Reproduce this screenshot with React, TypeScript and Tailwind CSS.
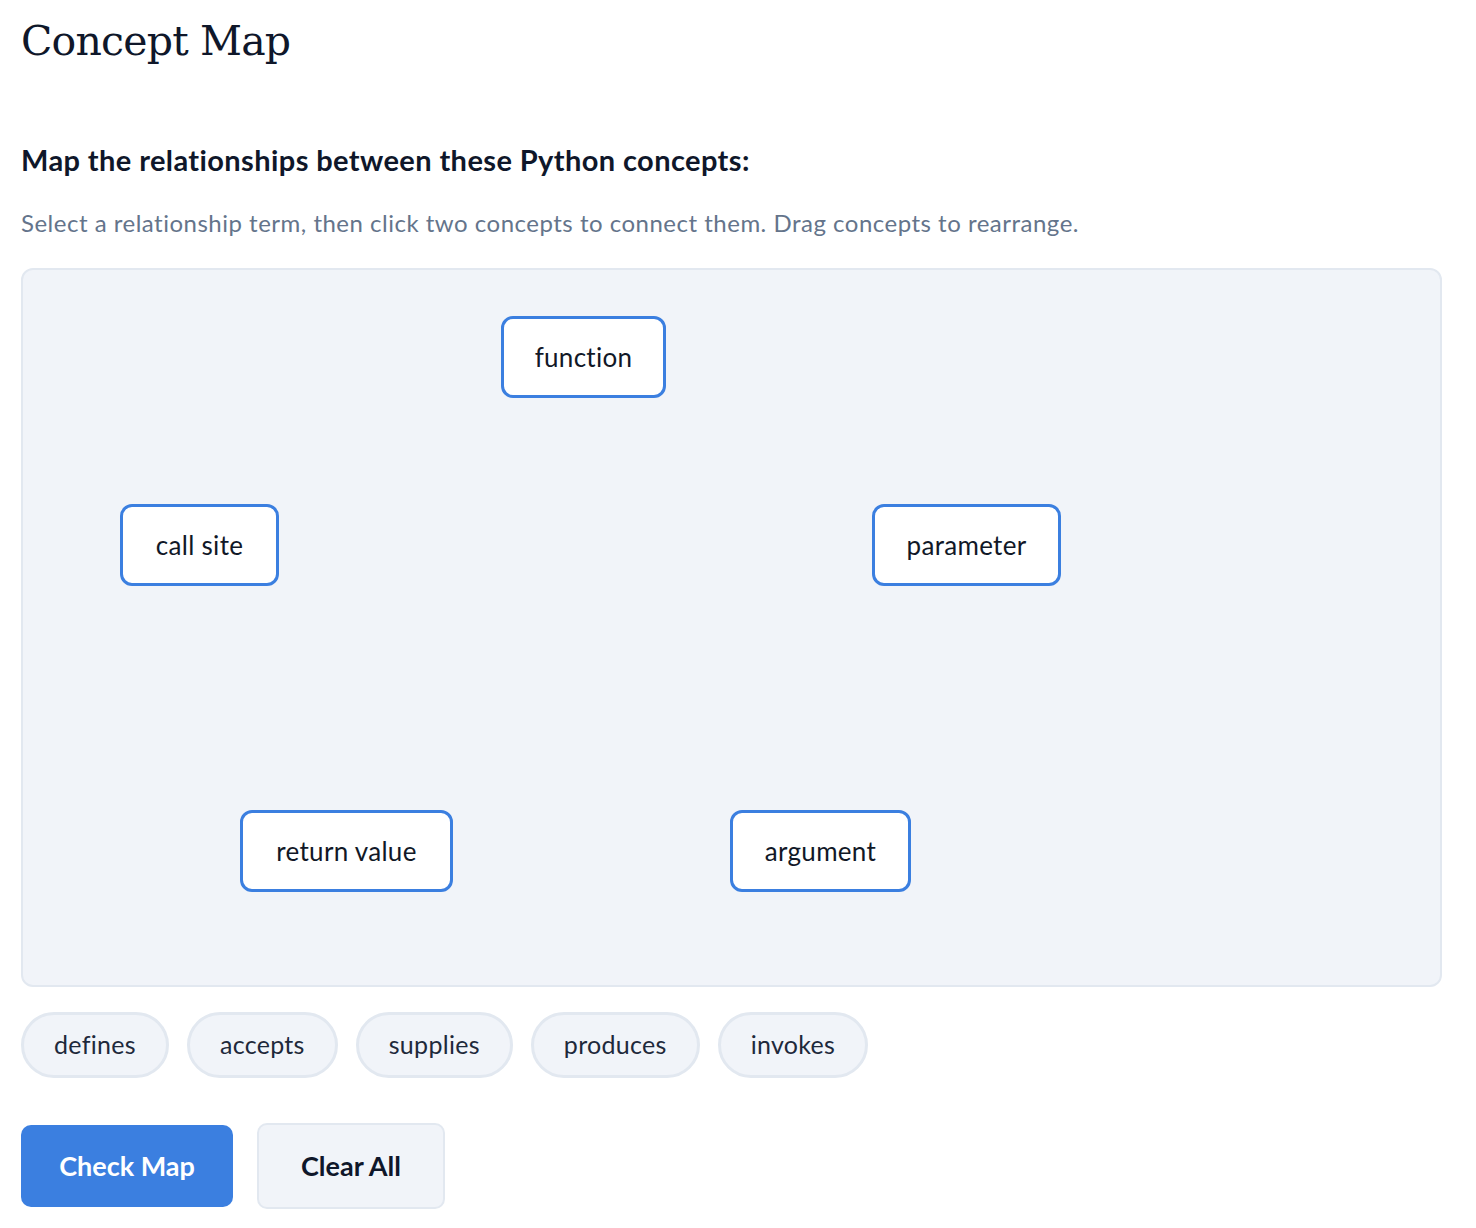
export default function App() {
  const nodes = [
    { t: "function", l: 478, tp: 46, w: 165 },
    { t: "call site", l: 97, tp: 234, w: 159 },
    { t: "parameter", l: 849, tp: 234, w: 189 },
    { t: "return value", l: 217, tp: 540, w: 213 },
    { t: "argument", l: 707, tp: 540, w: 181 },
  ];
  const terms = ["defines", "accepts", "supplies", "produces", "invokes"];
  return (
    <div className="min-h-screen bg-white px-[21px] text-[#111827]" style={{ fontFamily: "Lato, 'Noto Sans', sans-serif" }}>
      <h1 className="pt-[13px] text-[41px] leading-[56px] text-[#0f172a]" style={{ fontFamily: "'DejaVu Serif', 'Liberation Serif', serif", fontWeight: 400, letterSpacing: "-0.8px" }}>
        Concept Map
      </h1>
      <h2 className="mt-[74px] text-[29px] font-bold leading-[34px] tracking-[0.4px] text-[#0f172a]">Map the relationships between these Python concepts:</h2>
      <p className="mt-[31px] text-[24px] leading-[30px] tracking-[0.5px] text-[#64748b]">
        Select a relationship term, then click two concepts to connect them. Drag concepts to rearrange.
      </p>
      <div className="relative mt-[30px] h-[719px] w-[1421px] rounded-[12px] border-2 border-[#e2e8f0] bg-[#f1f4f9]">
        {nodes.map((n) => (
          <div
            key={n.t}
            className="absolute flex h-[82px] items-center justify-center rounded-[12px] border-[3px] border-[#3b7fe0] bg-white text-[26px] tracking-[0.3px] text-[#111827]"
            style={{ left: n.l, top: n.tp, width: n.w }}
          >
            {n.t}
          </div>
        ))}
      </div>
      <div className="mt-[25px] flex gap-[18px]">
        {terms.map((t) => (
          <div key={t} className="flex h-[66px] items-center rounded-full border-[3px] border-[#e2e8f0] bg-[#f1f4f9] px-[30px] text-[25px] tracking-[0.3px] text-[#1e293b]">
            {t}
          </div>
        ))}
      </div>
      <div className="mt-[45px] flex items-center gap-[24px]">
        <div className="flex h-[82px] w-[212px] items-center justify-center rounded-[10px] bg-[#3b7fe0] text-[27px] font-bold text-white">Check Map</div>
        <div className="flex h-[86px] w-[188px] items-center justify-center rounded-[10px] border-2 border-[#e2e8f0] bg-[#f1f4f9] text-[27px] font-bold text-[#0f172a]">Clear All</div>
      </div>
    </div>
  );
}
